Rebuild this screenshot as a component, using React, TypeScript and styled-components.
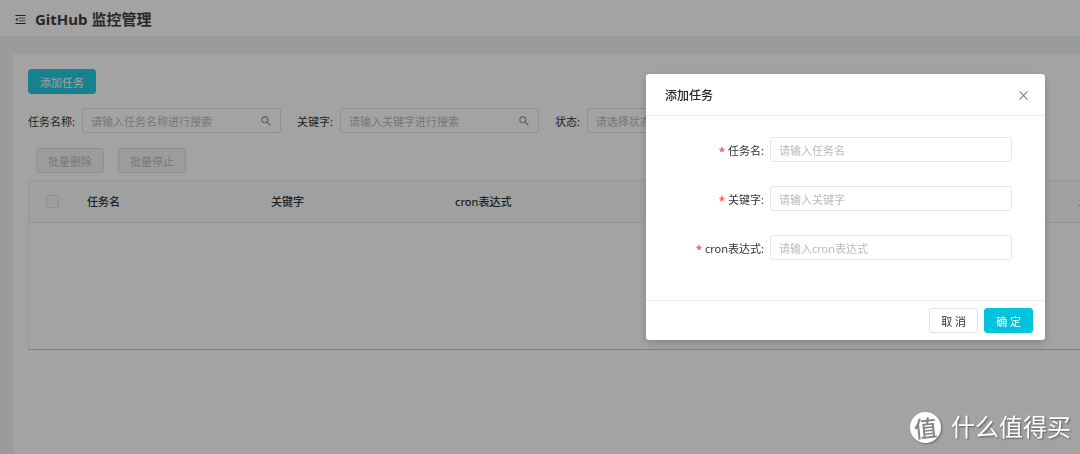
import React from 'react';
import styled, { createGlobalStyle } from 'styled-components';
import { AiOutlineClose, AiOutlineMenuFold, AiOutlineSearch } from 'react-icons/ai';

const GlobalStyle = createGlobalStyle`
  *, *::before, *::after { box-sizing: border-box; }
  html, body { height: 100%; margin: 0; }
  body {
    overflow: hidden;
    background: #f0f2f5;
    color: #333;
    font-family: "Noto Sans", "Noto Sans CJK SC", sans-serif;
    font-size: 11px;
    line-height: 17px;
  }
  #root { height: 100%; }
  button, input, select { font: inherit; margin: 0; }
`;

const Page = styled.div`
  min-height: 100%;
  display: flex;
  flex-direction: column;
`;

const TopBar = styled.header`
  display: flex;
  align-items: center;
  gap: 8px;
  height: 36px;
  padding: 2px 14px 0;
  background: #fff;
`;

const IconButton = styled.button`
  display: flex;
  padding: 0;
  border: 0;
  background: none;
  color: ${(p) => p.color ?? '#333'};
  cursor: pointer;
`;

const PageTitle = styled.h1`
  margin: 0;
  color: #404040;
  font-size: 15px;
  line-height: 24px;
  font-weight: 700;
`;

const Card = styled.main`
  flex: 1;
  min-width: 0;
  margin: 18px 0 0 13px;
  padding: 15px 0 0 15px;
  overflow: hidden;
  background: #fff;
`;

const Button = styled.button<{ $primary?: boolean; $light?: boolean }>`
  height: 25px;
  padding: 1px 11px 0;
  border: 1px solid ${(p) => (p.$light ? '#24cbe0' : p.$primary ? '#00c4de' : '#e0e0e0')};
  border-radius: 3px;
  background: ${(p) => (p.$light ? '#24cbe0' : p.$primary ? '#00c4de' : '#fff')};
  color: ${(p) => (p.$primary ? '#fff' : '#333')};
  line-height: 17px;
  white-space: pre;
  cursor: pointer;

  &:disabled {
    background: #f5f5f5;
    color: rgba(0, 0, 0, 0.28);
    cursor: default;
  }
`;

const Filters = styled.form`
  display: flex;
  gap: 16px;
  margin-top: 14px;
`;

const Filter = styled.div`
  display: flex;
  align-items: center;
  flex-shrink: 0;
  gap: 7px;

  label { padding-top: 1px; }
`;

const SearchBox = styled.div`
  display: flex;
  align-items: center;
  width: 199px;
  height: 25px;
  padding: 0 8px;
  border: 1px solid #e0e0e0;
  border-radius: 3px;
  color: rgba(0, 0, 0, 0.55);
`;

const SearchInput = styled.input`
  flex: 1;
  min-width: 0;
  padding: 1px 0 0;
  border: 0;
  outline: 0;
  background: none;
  &::placeholder { color: #bababa; opacity: 1; }
`;

const StatusSelect = styled.select`
  width: 199px;
  height: 25px;
  padding: 1px 8px 0;
  border: 1px solid #e0e0e0;
  border-radius: 3px;
  background: #fff;
  color: #bababa;
  appearance: none;
`;

const BatchActions = styled.div`
  display: flex;
  gap: 14px;
  margin: 15px 0 7px 8px;
`;

const TableFrame = styled.div`
  height: 170px;
  overflow: hidden;
  border: 1px solid #ebebeb;
  border-right: 0;
  border-bottom-color: #ccc;
`;

const Table = styled.table`
  width: 1230px;
  table-layout: fixed;
  border-collapse: collapse;
`;

const HeadCell = styled.th<{ $width?: number }>`
  width: ${(p) => p.$width ?? 184}px;
  height: 41px;
  padding: 0 11px;
  border-bottom: 1px solid #ebebeb;
  background: #fafafa;
  font-weight: 500;
  text-align: left;
`;

const Checkbox = styled.input`
  display: block;
  width: 13px;
  height: 13px;
  margin: 0 0 0 6px;
  appearance: none;
  border: 1px solid #dedede;
  border-radius: 2px;
  background: #f7f7f7;
`;

const Mask = styled.div`
  position: fixed;
  inset: 0;
  display: flex;
  justify-content: flex-end;
  align-items: flex-start;
  padding: 74px 35px 0;
  background: rgba(0, 0, 0, 0.36);
`;

const Dialog = styled.section`
  width: 399px;
  border-radius: 3px;
  background: #fff;
  box-shadow: 0 3px 9px rgba(0, 0, 0, 0.2);
`;

const DialogHeader = styled.header`
  display: flex;
  justify-content: space-between;
  align-items: center;
  height: 42px;
  padding: 2px 15px 0 19px;
  border-bottom: 1px solid #ececec;
`;

const DialogTitle = styled.h2`
  margin: 0;
  color: #262626;
  font-size: 12px;
  line-height: 18px;
  font-weight: 500;
`;

const Fields = styled.div`
  display: grid;
  gap: 24px;
  padding: 21px 33px 40px 0;
`;

const Field = styled.div`
  display: grid;
  grid-template-columns: 1fr 242px;
  align-items: center;
  gap: 6px;
`;

const FieldLabel = styled.label`
  padding-top: 1px;
  text-align: right;
  &::before {
    content: "*";
    margin-right: 3px;
    color: #ff4d4f;
    font-weight: 700;
  }
`;

const TextInput = styled.input`
  width: 100%;
  height: 25px;
  padding: 1px 8px 0;
  border: 1px solid #e6e6e6;
  border-radius: 3px;
  outline: 0;
  &::placeholder { color: #bababa; opacity: 1; }
`;

const DialogFooter = styled.footer`
  display: flex;
  justify-content: flex-end;
  gap: 6px;
  padding: 7px 12px;
  border-top: 1px solid #ececec;
`;

const Brand = styled.div`
  position: fixed;
  right: 9px;
  bottom: 9px;
  display: flex;
  align-items: center;
  gap: 10px;
  color: #fff;
  font-size: 24px;
  line-height: 36px;
  text-shadow: 1px 1px 2px rgba(0, 0, 0, 0.45);
`;

const BrandMark = styled.span`
  display: flex;
  justify-content: center;
  align-items: center;
  width: 31px;
  height: 31px;
  border-radius: 50%;
  background: #fff;
  box-shadow: 1px 1px 2px rgba(0, 0, 0, 0.35);
  color: #858585;
  font-size: 23px;
  font-weight: 500;
  text-shadow: none;
  transform: rotate(-6deg);
`;

const searches = [
  { id: 'name', label: '任务名称:', hint: '请输入任务名称进行搜索' },
  { id: 'keyword', label: '关键字:', hint: '请输入关键字进行搜索' },
];

const fields = [
  { id: 'task', label: '任务名', hint: '请输入任务名' },
  { id: 'word', label: '关键字', hint: '请输入关键字' },
  { id: 'cron', label: 'cron表达式', hint: '请输入cron表达式' },
];

export default function App() {
  return (
    <>
      <GlobalStyle />
      <Page>
        <TopBar>
          <IconButton type="button" aria-label="收起菜单">
            <AiOutlineMenuFold size={13} />
          </IconButton>
          <PageTitle>GitHub 监控管理</PageTitle>
        </TopBar>
        <Card>
          <Button type="button" $primary $light>添加任务</Button>
          <Filters>
            {searches.map((s) => (
              <Filter key={s.id}>
                <label htmlFor={s.id}>{s.label}</label>
                <SearchBox>
                  <SearchInput id={s.id} placeholder={s.hint} />
                  <AiOutlineSearch size={12} />
                </SearchBox>
              </Filter>
            ))}
            <Filter>
              <label htmlFor="status">状态:</label>
              <StatusSelect id="status" defaultValue="">
                <option value="">请选择状态</option>
              </StatusSelect>
            </Filter>
          </Filters>
          <BatchActions>
            <Button type="button" disabled>批量删除</Button>
            <Button type="button" disabled>批量停止</Button>
          </BatchActions>
          <TableFrame>
            <Table>
              <thead>
                <tr>
                  <HeadCell $width={47}>
                    <Checkbox type="checkbox" aria-label="全选" />
                  </HeadCell>
                  <HeadCell>任务名</HeadCell>
                  <HeadCell>关键字</HeadCell>
                  <HeadCell $width={624}>cron表达式</HeadCell>
                  <HeadCell $width={191}>上次</HeadCell>
                </tr>
              </thead>
            </Table>
          </TableFrame>
        </Card>
      </Page>
      <Mask>
        <Dialog role="dialog" aria-modal="true" aria-labelledby="dialog-title">
          <DialogHeader>
            <DialogTitle id="dialog-title">添加任务</DialogTitle>
            <IconButton type="button" aria-label="关闭" color="rgba(0, 0, 0, 0.5)">
              <AiOutlineClose size={13} />
            </IconButton>
          </DialogHeader>
          <form>
            <Fields>
              {fields.map((f) => (
                <Field key={f.id}>
                  <FieldLabel htmlFor={f.id}>{f.label}:</FieldLabel>
                  <TextInput id={f.id} placeholder={f.hint} required />
                </Field>
              ))}
            </Fields>
            <DialogFooter>
              <Button type="button">取 消</Button>
              <Button type="submit" $primary>确 定</Button>
            </DialogFooter>
          </form>
        </Dialog>
      </Mask>
      <Brand>
        <BrandMark>值</BrandMark>
        <span>什么值得买</span>
      </Brand>
    </>
  );
}
